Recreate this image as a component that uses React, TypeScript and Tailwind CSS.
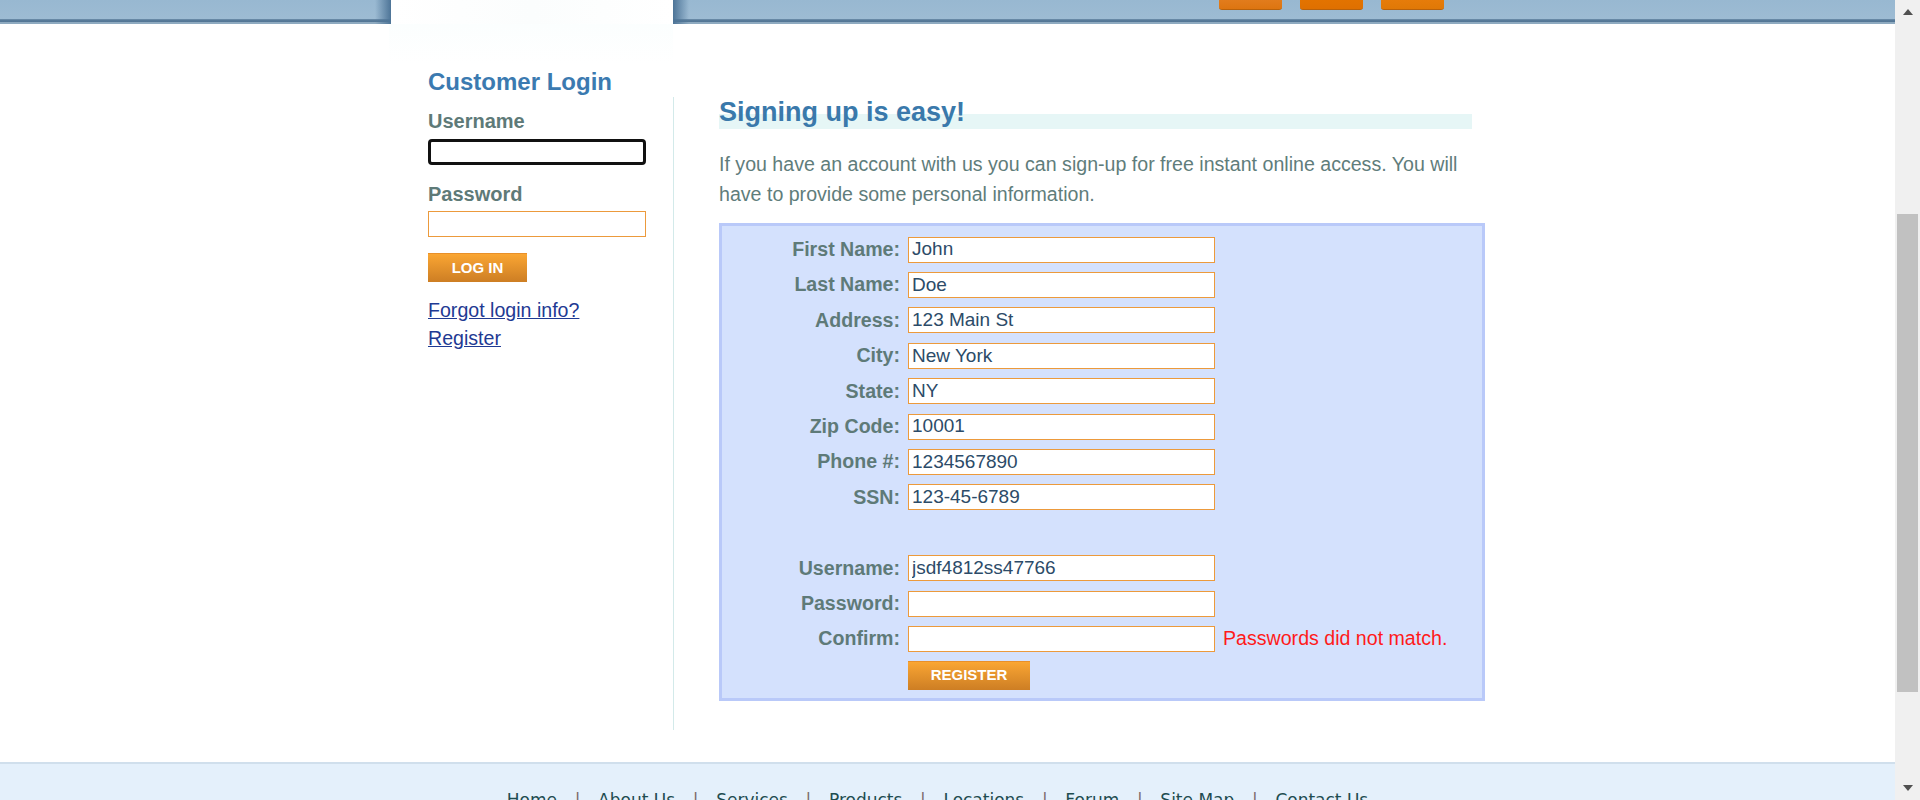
import React from "react";

const fields: { label: string; value: string }[] = [
    { label: "First Name:", value: "John" },
    { label: "Last Name:", value: "Doe" },
    { label: "Address:", value: "123 Main St" },
    { label: "City:", value: "New York" },
    { label: "State:", value: "NY" },
    { label: "Zip Code:", value: "10001" },
    { label: "Phone #:", value: "1234567890" },
    { label: "SSN:", value: "123-45-6789" },
];

const footerLinks = ["Home", "About Us", "Services", "Products", "Locations", "Forum", "Site Map", "Contact Us"];

function FormRow({ label, value, error }: { label: string; value: string; error?: string }) {
    return (
        <>
            <div className="flex h-[35.4px] items-center justify-end font-bold text-[#5e7a78]">{label}</div>
            <div className="flex h-[35.4px] items-center">
                <input
                    readOnly
                    value={value}
                    className="h-[26px] w-[307px] border border-[#ec9a3c] bg-white px-[3px] text-[19px] text-[#2c4b68] outline-none"
                />
            </div>
            <div className="flex h-[35.4px] items-center text-[#ff1a1a]">{error}</div>
        </>
    );
}

export default function App() {
    return (
        <div className="flex h-screen w-full overflow-hidden bg-white font-['Liberation_Sans',Arial,sans-serif] text-[19.6px]">
            <div className="flex min-w-0 flex-1 flex-col">
                {/* header band, only the bottom of it is in view */}
                <div className="h-[24px] w-full shrink-0 bg-[linear-gradient(to_bottom,#98b8d1_0px,#9dbbd3_19px,#6f8fab_19px,#4f7393_21px,#587a98_22px,#8eaac0_22px,#8eaac0_24px)]">
                    <div className="mx-auto flex h-full w-[1117px]">
                        <div className="-ml-[14px] h-full w-[16px] bg-gradient-to-r from-transparent to-[#4d7497]" />
                        <div className="h-full w-[282px] bg-gradient-to-r from-white via-[#fbfdfd] to-white" />
                        <div className="h-full w-[16px] bg-gradient-to-r from-[#4d7497] to-transparent" />
                        <div className="ml-[530px] flex gap-[18px]">
                            <div className="h-[10px] w-[63px] rounded-b-[3px] border-b border-[#b8620c] bg-gradient-to-b from-[#e27c1c] to-[#dd7510]" />
                            <div className="h-[10px] w-[63px] rounded-b-[3px] border-b border-[#b8620c] bg-gradient-to-b from-[#e37300] to-[#df7000]" />
                            <div className="h-[10px] w-[63px] rounded-b-[3px] border-b border-[#b8620c] bg-gradient-to-b from-[#e67c0a] to-[#e07806]" />
                        </div>
                    </div>
                </div>

                <div className="mx-auto flex w-[1117px] items-start">
                    {/* left: customer login */}
                    <div className="w-[284px] shrink-0 bg-gradient-to-b from-[#fbfefe] to-white to-[40px] pt-[44px] pl-[39px]">
                        <h3 className="text-[24px] leading-[28px] font-bold text-[#3b7ab0]">Customer Login</h3>
                        <div className="mt-[13px] text-[20px] leading-[24px] font-bold text-[#5e7a78]">Username</div>
                        <input
                            readOnly
                            className="mt-[6px] block h-[26px] w-[218px] rounded-[4px] border-[3px] border-[#111] bg-white outline-none"
                        />
                        <div className="mt-[17px] text-[20px] leading-[24px] font-bold text-[#5e7a78]">Password</div>
                        <input
                            readOnly
                            type="password"
                            className="mt-[5px] block h-[26px] w-[218px] border border-[#ec9a3c] bg-white outline-none"
                        />
                        <button
                            type="button"
                            className="mt-[16px] block h-[29px] w-[99px] border-t border-[#e8902a] bg-gradient-to-b from-[#faa633] to-[#cd7e24] text-[15px] font-bold text-white"
                        >
                            LOG IN
                        </button>
                        <div className="mt-[14px] flex flex-col leading-[28px]">
                            <a href="#" className="text-[#1f3a93] underline">
                                Forgot login info?
                            </a>
                            <a href="#" className="text-[#1f3a93] underline">
                                Register
                            </a>
                        </div>
                    </div>

                    {/* right: sign-up form */}
                    <div className="mt-[73px] flex-1 border-l border-[#d3eaea] pb-[29px] pl-[45px]">
                        <h2 className="h-[32px] w-[753px] bg-[linear-gradient(to_bottom,transparent_17px,#e6f6f6_17px,#e6f6f6_32px,transparent_32px)] text-[27px] leading-[30px] font-bold text-[#3a79ab]">
                            Signing up is easy!
                        </h2>
                        <p className="mt-[20px] w-[766px] leading-[30px] text-[#5f7d7b]">
                            If you have an account with us you can sign-up for free instant online access. You will
                            have to provide some personal information.
                        </p>
                        <div className="mt-[14px] w-[766px] border-[3px] border-[#b9c9f9] bg-[#d4e1fd] pt-[6px] pb-[8px]">
                            <div className="grid grid-cols-[178px_307px_1fr] gap-x-2">
                                {fields.map(f => (
                                    <FormRow key={f.label} label={f.label} value={f.value} />
                                ))}
                                <div className="col-span-3 h-[35.4px]" />
                                <FormRow label="Username:" value="jsdf4812ss47766" />
                                <FormRow label="Password:" value="" />
                                <FormRow label="Confirm:" value="" error="Passwords did not match." />
                                <div />
                                <div className="pt-[4px]">
                                    <button
                                        type="button"
                                        className="block h-[29px] w-[122px] border-t border-[#e8902a] bg-gradient-to-b from-[#faa633] to-[#cd7e24] text-[15px] font-bold text-white"
                                    >
                                        REGISTER
                                    </button>
                                </div>
                                <div />
                            </div>
                        </div>
                    </div>
                </div>

                {/* footer */}
                <div className="mt-[32px] flex-1 border-t-2 border-[#d0dfec] bg-[#e4f0fb] pt-[26px] pr-[20px]">
                    <div className="flex justify-center gap-[17.7px] font-['DejaVu_Sans',Verdana,sans-serif] text-[17px] leading-[20px] text-[#1e4c50]">
                        {footerLinks.map((l, i) => (
                            <React.Fragment key={l}>
                                {i > 0 && <span className="text-[#7a6a6a]">|</span>}
                                <a href="#">{l}</a>
                            </React.Fragment>
                        ))}
                    </div>
                </div>
            </div>

            {/* scrollbar */}
            <div className="flex w-[25px] shrink-0 flex-col items-center bg-[#f0f0f0]">
                <div className="flex h-[24px] items-center justify-center">
                    <svg width="10" height="6" viewBox="0 0 10 6">
                        <path d="M5 0 L10 6 L0 6 Z" fill="#505050" />
                    </svg>
                </div>
                <div className="mt-[190px] h-[478px] w-[21px] bg-[#c1c1c1]" />
                <div className="flex-1" />
                <div className="flex h-[24px] items-center justify-center">
                    <svg width="10" height="6" viewBox="0 0 10 6">
                        <path d="M0 0 L10 0 L5 6 Z" fill="#505050" />
                    </svg>
                </div>
            </div>
        </div>
    );
}
